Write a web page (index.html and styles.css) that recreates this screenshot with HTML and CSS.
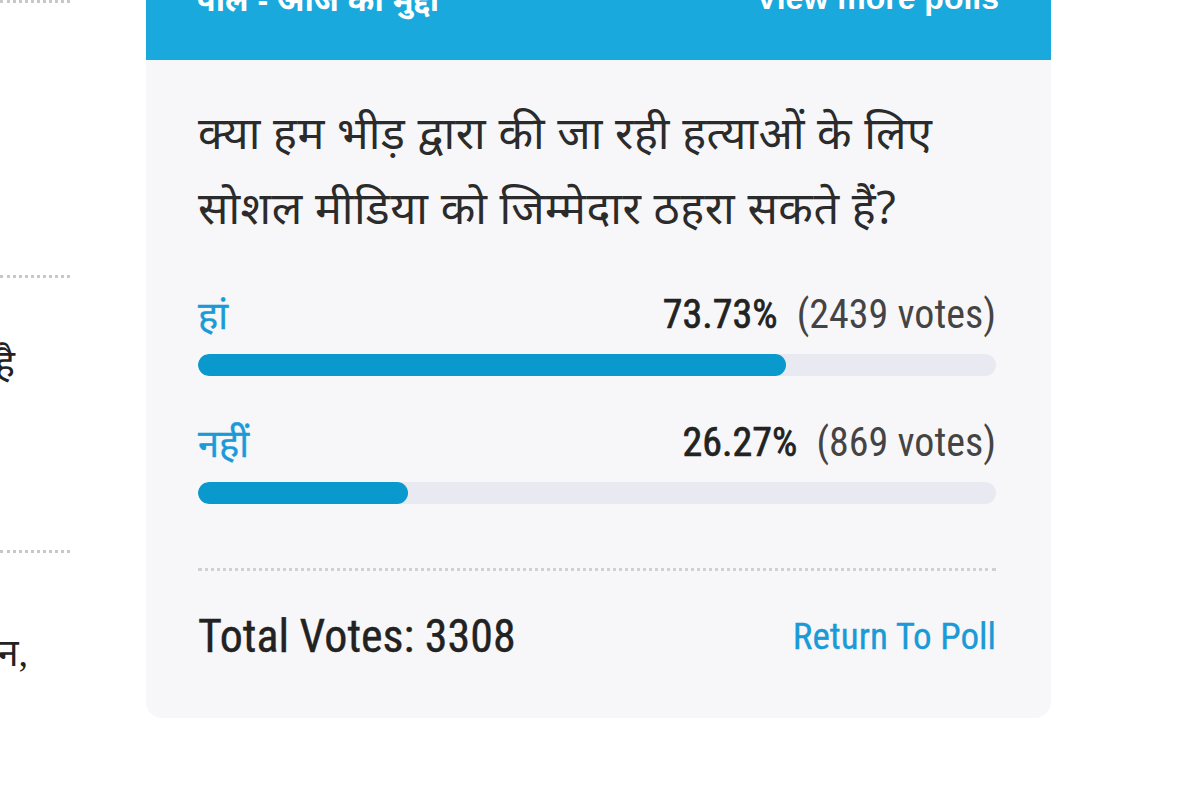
FILE: index.html
```html
<!DOCTYPE html>
<html lang="hi">
<head>
<meta charset="utf-8">
<title>Poll</title>
<link rel="stylesheet" href="styles.css">
</head>
<body>
<div class="page">
  <aside class="side">
    <div class="side-item"><div class="side-text">खबर</div></div>
    <div class="side-item"><div class="side-text clip">पुलिस ने मामला दर्ज किया है</div></div>
    <div class="side-item"><div class="side-text clip2">प्रधानमंत्री ने कहा कि जन,</div></div>
  </aside>
  <section class="card">
    <header class="card-head">
      <span class="head-title">पोल - आज का मुद्दा</span>
      <a class="head-link">View more polls</a>
    </header>
    <div class="card-body">
      <h2 class="question">क्या हम भीड़ द्वारा की जा रही हत्याओं के लिए सोशल मीडिया को जिम्मेदार ठहरा सकते हैं?</h2>
      <div class="option">
        <div class="opt-row">
          <span class="opt-label">हां</span>
          <span class="opt-stat"><b class="pct">73.73%</b> <span class="votes">(2439 votes)</span></span>
        </div>
        <div class="bar"><div class="fill" style="width:73.73%"></div></div>
      </div>
      <div class="option">
        <div class="opt-row">
          <span class="opt-label">नहीं</span>
          <span class="opt-stat"><b class="pct">26.27%</b> <span class="votes">(869 votes)</span></span>
        </div>
        <div class="bar"><div class="fill" style="width:26.27%"></div></div>
      </div>
      <div class="divider"></div>
      <div class="foot">
        <span class="total">Total Votes: 3308</span>
        <a class="return">Return To Poll</a>
      </div>
    </div>
  </section>
</div>
</body>
</html>
```

FILE: styles.css
```css
* { box-sizing: border-box; }
html, body { margin: 0; padding: 0; background: #ffffff; overflow: hidden; }
body { font-family: "Liberation Sans", "Noto Sans", sans-serif; color: #2b2b2b; }

.page {
  display: flex;
  align-items: flex-start;
  margin-top: -40px;
  width: 1200px;
}

.side {
  width: 70px;
  flex: none;
  display: flex;
  flex-direction: column;
  padding-top: 40px;
}
.side-item {
  height: 275px;
  border-top: 3px dotted #c8c8c8;
  display: flex;
  justify-content: flex-end;
  overflow: hidden;
}
.side-text {
  font-family: "Liberation Serif", "Noto Sans", serif;
  font-size: 38px;
  color: #222;
  white-space: nowrap;
  visibility: hidden;
}
.side-text.clip {
  visibility: visible;
  margin-top: 58px;
  margin-right: 55px;
}
.side-text.clip2 {
  visibility: visible;
  margin-top: 72px;
  margin-right: 42px;
}

.card {
  margin-left: 76px;
  width: 905px;
  flex: none;
  background: #f7f7f9;
  border-radius: 0 0 16px 16px;
  overflow: hidden;
}
.card-head {
  height: 100px;
  background: #1aa9dc;
  display: flex;
  align-items: center;
  justify-content: space-between;
  padding: 0 52px 24px 50px;
  color: #ffffff;
  font-weight: bold;
  font-size: 32px;
}
.head-title, .head-link { color: #fff; }

.card-body {
  padding: 34px 55px 57px 52px;
}
.question {
  margin: 0;
  font-family: "Noto Sans", "Liberation Sans", sans-serif;
  font-weight: normal;
  font-size: 45px;
  letter-spacing: 0.5px;
  line-height: 75px;
  color: #2b2b2b;
}

.option { margin-top: 48px; }
.option + .option { margin-top: 44px; }
.opt-row {
  display: flex;
  justify-content: space-between;
  align-items: center;
  height: 44px;
}
.opt-label {
  font-family: "Noto Sans", sans-serif;
  font-size: 38px;
  color: #1a9ad6;
  -webkit-text-stroke: 0.4px #1a9ad6;
}
.opt-stat {
  font-family: "Liberation Sans Narrow", "Roboto Condensed", Roboto, sans-serif;
  font-size: 40px;
  color: #2b2b2b;
}
.pct { font-weight: normal; color: #222; -webkit-text-stroke: 0.7px #222; }
.votes { margin-left: 10px; color: #444; }

.bar {
  margin-top: 18px;
  height: 22px;
  border-radius: 11px;
  background: #e9e9f1;
  overflow: hidden;
}
.fill {
  height: 100%;
  background: #0a99cc;
  border-radius: 11px;
}

.divider {
  margin-top: 64px;
  border-top: 3px dotted #cfcfd4;
}
.foot {
  display: flex;
  justify-content: space-between;
  align-items: center;
  height: 50px;
  margin-top: 40px;
}
.total {
  font-family: "Liberation Sans Narrow", "Roboto Condensed", Roboto, sans-serif;
  font-size: 46px;
  color: #222;
  -webkit-text-stroke: 0.4px #222;
}
.return {
  font-family: "Liberation Sans Narrow", "Roboto Condensed", Roboto, sans-serif;
  font-size: 37px;
  color: #1a9ad6;
  -webkit-text-stroke: 0.3px #1a9ad6;
}
```
